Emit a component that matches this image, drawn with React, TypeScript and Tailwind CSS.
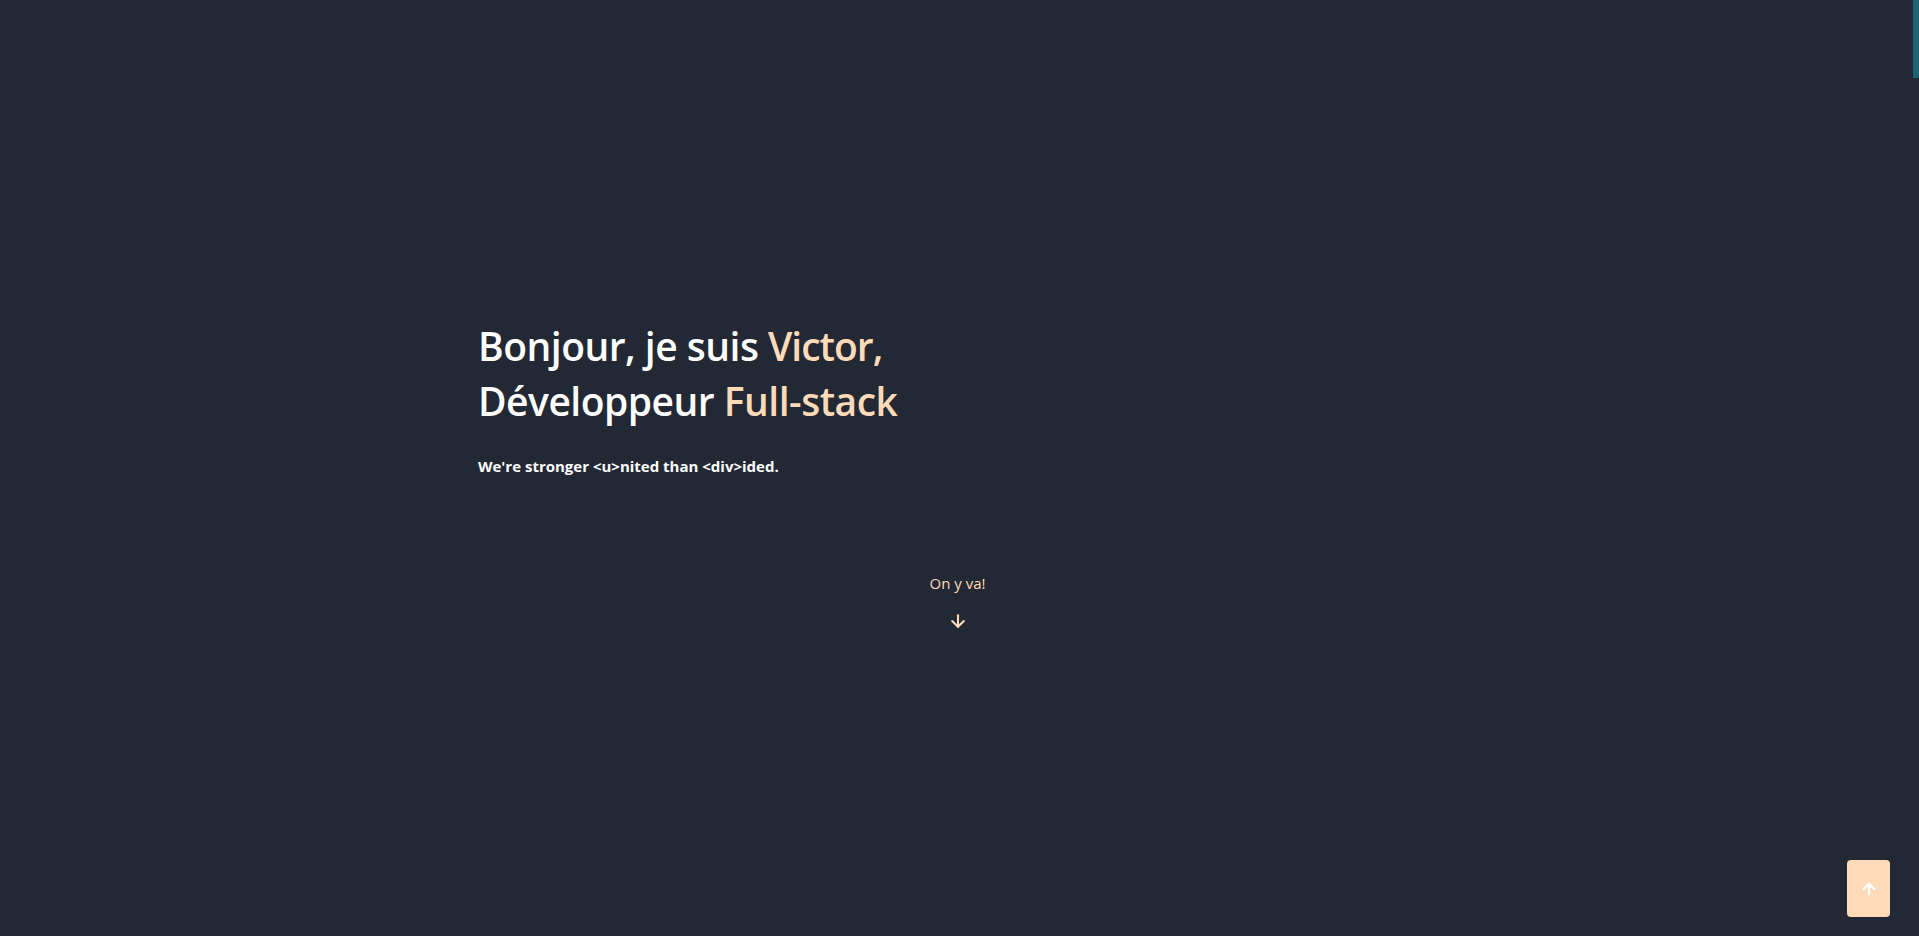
import React from 'react';
import { ArrowDown, ArrowUp } from 'lucide-react';

export default function App() {
  return (
    <div className="relative min-h-screen w-full bg-[#222834] overflow-hidden" style={{ fontFamily: '"Open Sans", "Noto Sans", sans-serif' }}>
      {/* Hero */}
      <section className="flex flex-col pt-[318px] pl-[478px]">
        <h1 className="text-[39px] leading-[55px] font-semibold text-white tracking-[-0.5px]">
          Bonjour, je suis <span className="text-[#ffdab9] tracking-[-1px]">Victor,</span>
          <br />
          Développeur <span className="text-[#ffdab9]">Full-stack</span>
        </h1>
        <p className="mt-[26px] text-[15px] leading-6 font-bold text-white">
          We're stronger &lt;u&gt;nited than &lt;div&gt;ided.
        </p>
      </section>

      {/* Scroll hint */}
      <div className="flex flex-col items-center pt-[95px] pr-[4px]">
        <span className="text-[15px] leading-5 text-[#ffdab9]">On y va!</span>
        <ArrowDown size={20} strokeWidth={2.5} className="mt-[18px] text-[#ffdab9]" />
      </div>

      {/* Scrollbar thumb */}
      <div className="fixed top-0 right-0 w-[6px] h-[78px] bg-[#1e6374]" />

      {/* Back to top */}
      <button className="fixed right-[29px] bottom-[19px] w-[43px] h-[57px] rounded bg-[#ffdab9] flex items-center justify-center">
        <ArrowUp size={18} strokeWidth={3} className="text-white" />
      </button>
    </div>
  );
}
